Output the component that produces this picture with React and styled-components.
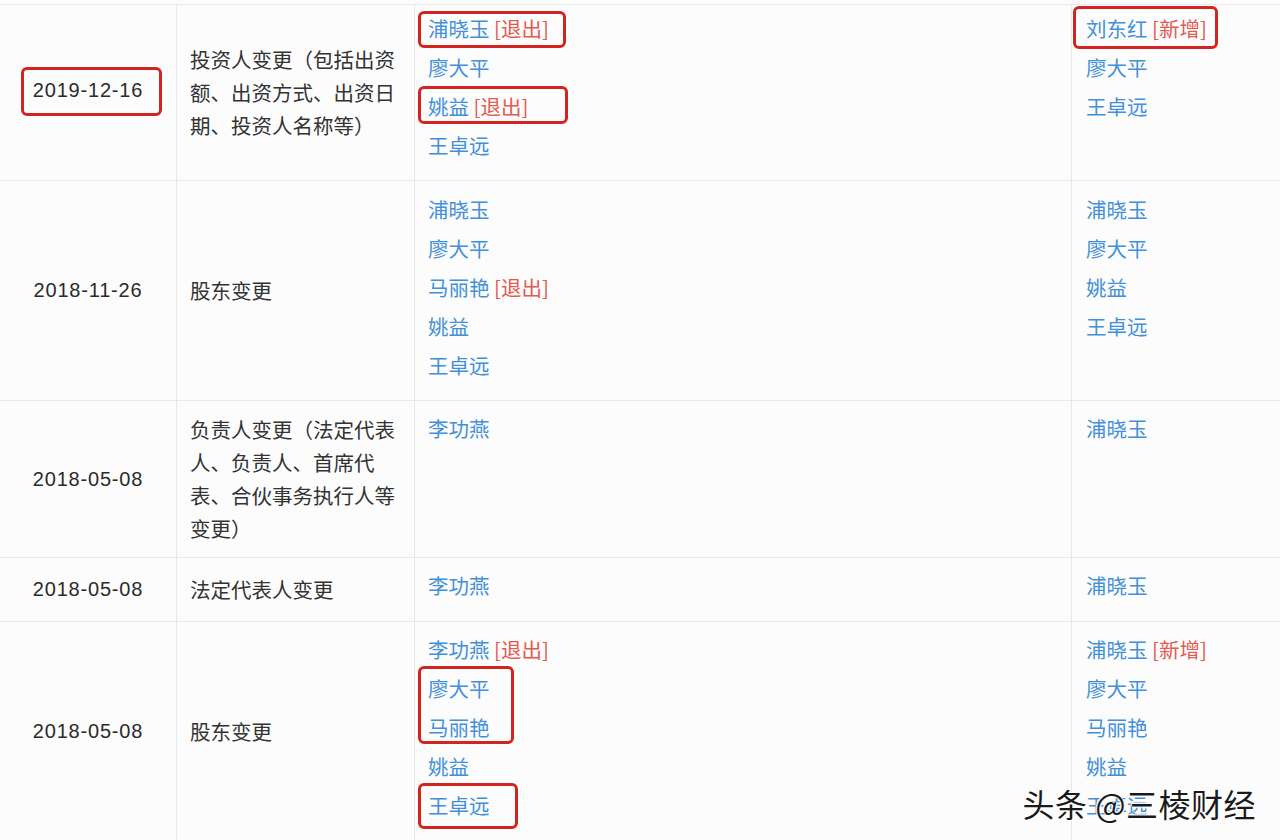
import React from 'react';
import styled, { createGlobalStyle } from 'styled-components';

const GlobalStyle = createGlobalStyle`
  body {
    margin: 0;
    background: #fcfcfd;
    font-family: "Noto Sans CJK SC", "Noto Sans", sans-serif;
  }
`;

const Page = styled.div`
  position: relative;
  width: 1280px;
  height: 840px;
  overflow: hidden;
  padding-top: 4px;
  box-sizing: border-box;
  background: #fcfcfd;
`;

const Table = styled.div`
  border-top: 1px solid #e8e8ec;
`;

const Row = styled.div`
  display: grid;
  grid-template-columns: 177px 238px 657px 1fr;
  height: ${p => p.$h}px;
  box-sizing: border-box;
  border-bottom: 1px solid #e8e8ec;
`;

const DateCell = styled.div`
  position: relative;
  display: flex;
  align-items: center;
  justify-content: center;
  padding-bottom: ${p => p.$lift || 0}px;
  border-right: 1px solid #e8e8ec;
  font-family: "Liberation Sans", Arial, sans-serif;
  font-size: 20px;
  letter-spacing: 0.8px;
  color: #2b2b2b;
`;

const DescCell = styled.div`
  display: flex;
  align-items: center;
  padding: 0 14px 0 13px;
  border-right: 1px solid #e8e8ec;
  font-size: 20.5px;
  line-height: 33px;
  color: #333;
`;

const NamesCell = styled.div`
  position: relative;
  padding: ${p => p.$top}px 0 0 ${p => p.$left}px;
  border-right: ${p => (p.$last ? 'none' : '1px solid #e8e8ec')};
`;

const NameLine = styled.div`
  font-size: 20.5px;
  line-height: 39px;
  color: #4390d8;
  white-space: nowrap;
`;

const Tag = styled.span`
  color: #e25a50;
`;

const Highlight = styled.span`
  position: absolute;
  left: ${p => p.$l}px;
  top: ${p => p.$t}px;
  width: ${p => p.$w}px;
  height: ${p => p.$h}px;
  box-sizing: border-box;
  border: 3px solid #d2251f;
  border-radius: 6px;
  pointer-events: none;
`;

const Watermark = styled.div`
  position: absolute;
  right: 24px;
  bottom: 17px;
  font-size: 32px;
  line-height: 40px;
  color: #1a1a1a;
  letter-spacing: 0.5px;
  text-shadow: 0 0 2px #fff, 0 0 2px #fff, 1px 1px 1px #fff, -1px -1px 1px #fff;
`;

const rows = [
  {
    h: 176,
    date: '2019-12-16',
    lift: 4,
    desc: '投资人变更（包括出资额、出资方式、出资日期、投资人名称等）',
    top: 4,
    before: [
      { n: '浦晓玉', tag: '[退出]' },
      { n: '廖大平' },
      { n: '姚益', tag: '[退出]' },
      { n: '王卓远' },
    ],
    after: [{ n: '刘东红', tag: '[新增]' }, { n: '廖大平' }, { n: '王卓远' }],
    dateBox: { l: 21, t: 62, w: 141, h: 49 },
    beforeBoxes: [
      { l: 3, t: 6, w: 148, h: 37 },
      { l: 3, t: 81, w: 150, h: 38 },
    ],
    afterBoxes: [{ l: 1, t: 1, w: 145, h: 43 }],
  },
  {
    h: 220,
    date: '2018-11-26',
    desc: '股东变更',
    top: 9,
    before: [
      { n: '浦晓玉' },
      { n: '廖大平' },
      { n: '马丽艳', tag: '[退出]' },
      { n: '姚益' },
      { n: '王卓远' },
    ],
    after: [{ n: '浦晓玉' }, { n: '廖大平' }, { n: '姚益' }, { n: '王卓远' }],
  },
  {
    h: 157,
    date: '2018-05-08',
    desc: '负责人变更（法定代表人、负责人、首席代表、合伙事务执行人等变更）',
    top: 8,
    before: [{ n: '李功燕' }],
    after: [{ n: '浦晓玉' }],
  },
  {
    h: 64,
    date: '2018-05-08',
    desc: '法定代表人变更',
    top: 8,
    before: [{ n: '李功燕' }],
    after: [{ n: '浦晓玉' }],
  },
  {
    h: 220,
    date: '2018-05-08',
    desc: '股东变更',
    top: 8,
    before: [
      { n: '李功燕', tag: '[退出]' },
      { n: '廖大平' },
      { n: '马丽艳' },
      { n: '姚益' },
      { n: '王卓远' },
    ],
    after: [
      { n: '浦晓玉', tag: '[新增]' },
      { n: '廖大平' },
      { n: '马丽艳' },
      { n: '姚益' },
      { n: '王卓远' },
    ],
    beforeBoxes: [
      { l: 3, t: 44, w: 96, h: 78 },
      { l: 3, t: 161, w: 100, h: 46 },
    ],
  },
];

const Names = ({ list }) =>
  list.map((item, i) => (
    <NameLine key={i}>
      {item.n}
      {item.tag && <Tag> {item.tag}</Tag>}
    </NameLine>
  ));

const Boxes = ({ list }) =>
  (list || []).map((b, i) => <Highlight key={i} $l={b.l} $t={b.t} $w={b.w} $h={b.h} />);

export default function App() {
  return (
    <Page>
      <GlobalStyle />
      <Table>
        {rows.map((r, i) => (
          <Row key={i} $h={r.h}>
            <DateCell $lift={r.lift}>
              {r.date}
              {r.dateBox && <Boxes list={[r.dateBox]} />}
            </DateCell>
            <DescCell>{r.desc}</DescCell>
            <NamesCell $top={r.top} $left={13}>
              <Names list={r.before} />
              <Boxes list={r.beforeBoxes} />
            </NamesCell>
            <NamesCell $top={r.top} $left={14} $last>
              <Names list={r.after} />
              <Boxes list={r.afterBoxes} />
            </NamesCell>
          </Row>
        ))}
      </Table>
      <Watermark>头条 @三棱财经</Watermark>
    </Page>
  );
}
